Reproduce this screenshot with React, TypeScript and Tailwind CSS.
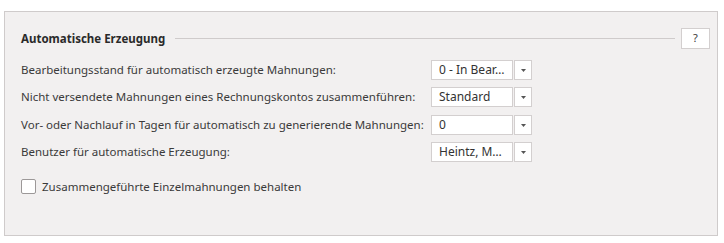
const rows = [
  { label: 'Bearbeitungsstand für automatisch erzeugte Mahnungen:', value: '0 - In Bear…', mt: 'mt-[11px]' },
  { label: 'Nicht versendete Mahnungen eines Rechnungskontos zusammenführen:', value: 'Standard', mt: 'mt-[7px]' },
  { label: 'Vor- oder Nachlauf in Tagen für automatisch zu generierende Mahnungen:', value: '0', mt: 'mt-[8px]' },
  { label: 'Benutzer für automatische Erzeugung:', value: 'Heintz, M…', mt: 'mt-[7px]' },
];

function Combo({ value }: { value: string }) {
  return (
    <div className="flex h-[20px] gap-[1px]">
      <div className="flex w-[82px] items-center border border-[#d3cfcf] bg-white pl-[7px] text-[12px] text-[#333]">
        {value}
      </div>
      <div className="flex w-[18px] items-center justify-center border border-[#d3cfcf] bg-white">
        <svg width="5" height="3" viewBox="0 0 5 3">
          <path d="M0 0h5L2.5 3z" fill="#555" />
        </svg>
      </div>
    </div>
  );
}

export default function App() {
  return (
    <div className="h-[243px] w-[724px] bg-white pl-[4px] pt-[11px] font-['Noto_Sans',sans-serif] text-[11.5px] text-[#3a3a3a]">
      <div className="h-[225px] w-[714px] border border-[#cfcbcb] bg-[#f2f0f0] pl-[16px] pr-[7px] pt-[16px]">
        <div className="flex h-[21px] items-center">
          <span className="font-bold text-[#2a2a2a]">Automatische Erzeugung</span>
          <div className="ml-[10px] h-px flex-1 bg-[#cfcbcb]" />
          <div className="ml-[6px] flex h-[21px] w-[29px] items-center justify-center border border-[#d3cfcf] bg-white text-[11px]">
            ?
          </div>
        </div>
        {rows.map((row) => (
          <div className={`flex h-[20px] items-center ${row.mt}`} key={row.label}>
            <span className="w-[410px] shrink-0 whitespace-nowrap">{row.label}</span>
            <Combo value={row.value} />
          </div>
        ))}
        <label className="mt-[16px] flex items-center gap-[6px]">
          <span className="h-[15px] w-[15px] rounded-[2px] border border-[#9c9898] bg-white" />
          <span>Zusammengeführte Einzelmahnungen behalten</span>
        </label>
      </div>
    </div>
  );
}
